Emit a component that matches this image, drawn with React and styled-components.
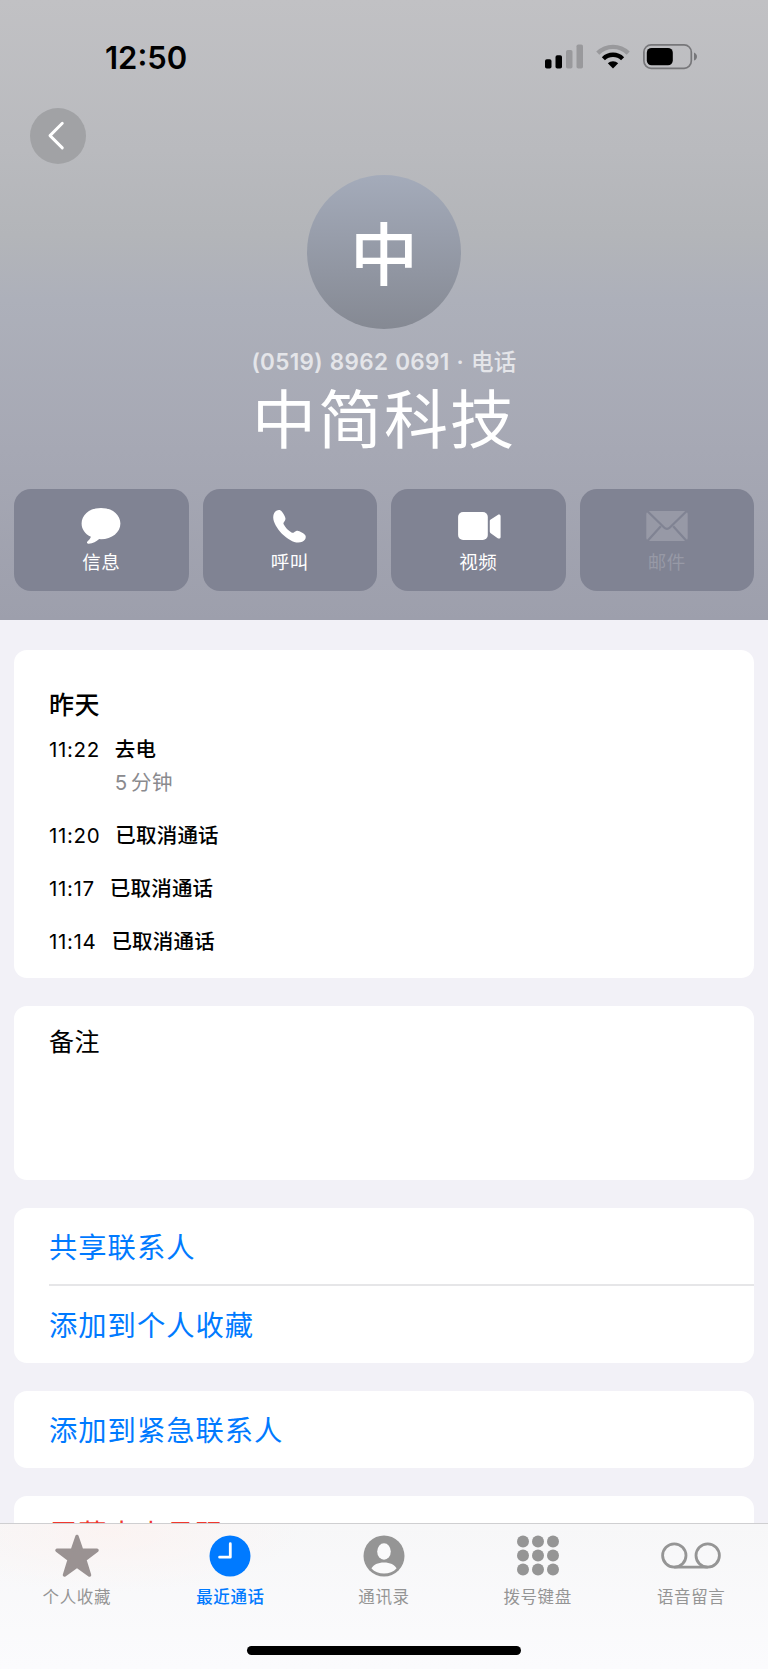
import React from 'react';
import styled, { createGlobalStyle } from 'styled-components';

const GlobalStyle = createGlobalStyle`
  * {
    box-sizing: border-box;
  }

  body {
    margin: 0;
    background: #f2f1f7;
    font-family: Inter, 'Noto Sans CJK SC', sans-serif;
    color: #000;
  }

  svg {
    display: block;
    overflow: visible;
  }
`;

const Page = styled.div`
  display: flex;
  flex-direction: column;
  width: 768px;
  height: 1669px;
  overflow: hidden;
`;

const Content = styled.main`
  flex: 1;
  min-height: 0;
  overflow: hidden;
`;

const Header = styled.header`
  display: flex;
  flex-direction: column;
  height: 620px;
  background: linear-gradient(
    180deg,
    #c1c1c4 0,
    #b9babe 150px,
    #b3b5b9 235px,
    #adb0ba 300px,
    #a6a8b4 450px,
    #9d9fac 620px
  );
`;

const StatusBar = styled.div`
  display: flex;
  align-items: center;
  justify-content: space-between;
  height: 108px;
  padding: 5px 71px 0 105px;
`;

const Time = styled.span`
  padding-top: 2px;
  font-size: 31px;
  font-weight: 600;
  line-height: 36px;
`;

const StatusIcons = styled.div`
  display: flex;
  align-items: center;
  gap: 13px;
`;

const BackButton = styled.button`
  display: flex;
  align-items: center;
  justify-content: center;
  width: 56px;
  height: 56px;
  margin-left: 30px;
  padding: 0;
  border: 0;
  border-radius: 50%;
  background: #a1a2a5;
`;

const Avatar = styled.div`
  align-self: center;
  width: 154px;
  height: 154px;
  margin-top: 11px;
  border-radius: 50%;
  background: linear-gradient(180deg, #a4abba, #858993);
  color: #fff;
  font-size: 68px;
  font-weight: 500;
  line-height: 160px;
  text-align: center;
`;

const PhoneLine = styled.p`
  margin: 19px 0 0;
  color: #e4e5e9;
  font-size: 22.5px;
  font-weight: 600;
  line-height: 28px;
  letter-spacing: 0.3px;
  word-spacing: 1px;
  text-align: center;
`;

const PhoneKind = styled.span`
  font-weight: 500;
`;

const ContactName = styled.h1`
  margin: 7px 0 0;
  color: #fff;
  font-size: 64px;
  font-weight: 400;
  line-height: 74px;
  letter-spacing: 2px;
  text-align: center;
`;

const Actions = styled.div`
  display: grid;
  grid-template-columns: repeat(4, 1fr);
  gap: 14px;
  margin-top: 32px;
  padding: 0 14px;
`;

const ActionTile = styled.button`
  display: flex;
  flex-direction: column;
  align-items: center;
  height: 102px;
  padding: 17px 0 0;
  border: 0;
  border-radius: 17px;
  background: #808393;
  color: ${({ $disabled }) => ($disabled ? '#9799a6' : '#fff')};
  font-family: inherit;
`;

const ActionLabel = styled.span`
  margin-top: 4px;
  font-size: 18.5px;
  line-height: 24px;
  letter-spacing: 0.6px;
`;

const Sections = styled.div`
  display: flex;
  flex-direction: column;
  gap: 28px;
  padding: 30px 14px 0;
`;

const Card = styled.section`
  flex-shrink: 0;
  height: ${({ $height }) => $height}px;
  padding-left: 35px;
  border-radius: 13px;
  background: #fff;
`;

const DayTitle = styled.h2`
  margin: 0;
  padding-top: 39px;
  font-size: 25px;
  font-weight: 500;
  line-height: 32px;
  letter-spacing: 0.6px;
`;

const CallList = styled.div`
  padding-top: 14px;
`;

const CallRow = styled.div`
  display: flex;
  gap: 15px;
  padding-bottom: 23px;
  font-size: 20.5px;
  line-height: 30px;
`;

const CallTime = styled.span`
  font-kerning: none;
  letter-spacing: 0.65px;
`;

const CallInfo = styled.div`
  display: flex;
  flex-direction: column;
  gap: 3px;
`;

const CallKind = styled.span`
  font-weight: 500;
  letter-spacing: 0.2px;
`;

const CallLength = styled.span`
  color: #8a8a8e;
  letter-spacing: 0.5px;
  word-spacing: -3px;
`;

const NoteTitle = styled.h2`
  margin: 0;
  padding-top: 20px;
  font-size: 25px;
  font-weight: 400;
  line-height: 32px;
  letter-spacing: 0.6px;
`;

const LinkRow = styled.div`
  height: 77px;
  border-top: ${({ $divided }) => ($divided ? '2px solid #e6e6e8' : '0')};
  color: ${({ $danger }) => ($danger ? '#f0382e' : '#007aff')};
  font-size: 28.3px;
  line-height: ${({ $danger }) => ($danger ? 79 : 81)}px;
  letter-spacing: 1px;

  & + & {
    height: 79px;
    margin-top: -1px;
    line-height: 80px;
  }
`;

const TabBar = styled.nav`
  flex-shrink: 0;
  height: 146px;
  border-top: 1px solid #cfcfd1;
  background:
    radial-gradient(ellipse 190px 60px at 110px 8px, rgba(255, 240, 236, 0.5), rgba(255, 243, 240, 0)),
    linear-gradient(180deg, #f7f7f8, #fbfbfd);
`;

const Tabs = styled.div`
  display: grid;
  grid-template-columns: repeat(5, 1fr);
  height: 122px;
`;

const Tab = styled.div`
  display: flex;
  flex-direction: column;
  align-items: center;
  padding-top: 8px;
  color: ${({ $active }) => ($active ? '#007aff' : '#959595')};
  font-size: 16.5px;
  font-weight: ${({ $active }) => ($active ? 500 : 400)};
  line-height: 24px;
  letter-spacing: 0.6px;
`;

const TabIcon = styled.div`
  display: flex;
  align-items: center;
  height: 48px;
  margin-bottom: 5px;
`;

const HomeIndicator = styled.div`
  width: 274px;
  height: 9px;
  margin: 0 auto;
  border-radius: 5px;
  background: #000;
`;

const SignalIcon = () => (
  <svg width="38" height="25" viewBox="0 0 38 25">
    <rect x="0" y="15.2" width="6.5" height="9.3" rx="1.8" />
    <rect x="10.5" y="11.2" width="6.5" height="13.3" rx="1.8" />
    <rect x="21" y="6" width="6.5" height="18.5" rx="1.8" fill="#99999c" />
    <rect x="31.5" y="0.5" width="6.5" height="24" rx="1.8" fill="#99999c" />
  </svg>
);

const WifiIcon = () => (
  <svg width="34" height="25" viewBox="0 0 34 25" fill="none" strokeWidth="4.4">
    <path d="M1.8 9.1a21.6 21.6 0 0 1 30.4 0" stroke="#99999c" />
    <path d="M7.4 14.7a13.6 13.6 0 0 1 19.2 0" stroke="#000" />
    <path d="M11.8 19.3a7.4 7.4 0 0 1 10.4 0L17 24.6z" fill="#000" />
  </svg>
);

const BatteryIcon = () => (
  <svg width="54" height="25" viewBox="0 0 54 25">
    <rect x="0.9" y="0.9" width="47.4" height="23.4" rx="7.2" fill="none" stroke="#77777a" strokeWidth="1.7" />
    <rect x="3.8" y="3.9" width="26" height="17.4" rx="4.8" />
    <path d="M51 8.4c1.8.8 3 2.3 3 4.1s-1.2 3.4-3 4.1z" fill="#77777a" />
  </svg>
);

const BackIcon = () => (
  <svg width="56" height="56" viewBox="0 0 56 56" fill="none">
    <path d="M32.3 15.3 20 27.6l12.3 12.3" stroke="#fff" strokeWidth="2.9" strokeLinecap="round" strokeLinejoin="round" />
  </svg>
);

const MessageIcon = () => (
  <svg width="44" height="40" viewBox="0 0 44 40" fill="currentColor">
    <path d="M22 1.9C11 1.9 2.6 8.6 2.6 17.4c0 5.8 3.6 10.6 9.3 13.4-.6 1.7-1.8 3.2-3.3 4.5-1.3 1.2-.6 2.7 1.1 2.5 4.3-.4 7.6-2.2 10.500-4.700l1.800.1c11 0 19.400-7 19.400-15.800S33 1.900 22 1.900z" />
  </svg>
);

const PhoneIcon = () => (
  <svg width="44" height="40" viewBox="1.3 0 44 40" fill="currentColor">
    <path d="M10.1 4.6c2.1-1.1 3.9-.6 5.2 1.2 1.5 2 2.7 4.1 3.3 5.9.5 1.5-.1 2.7-1.1 4-.8 1-1 1.7-.4 2.9 1.7 3.3 4.3 6 7.7 7.9 1 .6 1.800.4 2.700-.3 1.900-1.400 3.300-1.900 5.200-.9 1.900.9 4 2.100 5.200 3.200 1.500 1.400 1.500 3.200.4 5-1.300 2-3.800 3-6.800 3-4.900 0-11-3.600-16.300-8.800C10.400 22.600 6.500 16.300 6.500 11.300c0-3.100 1.500-5.600 3.600-6.700z" />
  </svg>
);

const VideoIcon = () => (
  <svg width="44" height="40" viewBox="-1.5 0 44 40" fill="currentColor">
    <rect x="0.6" y="6" width="29.7" height="28" rx="5" />
    <path d="M32.3 14.7v10.8c0 .8.3 1.3.9 1.8l7 4.9c1.3.9 2.9.3 2.9-1.3V10.2c0-1.6-1.6-2.2-2.9-1.3l-7 4.5c-.6.4-.9.7-.9 1.3z" />
  </svg>
);

const MailIcon = () => (
  <svg width="44" height="40" viewBox="0 0 44 40">
    <rect x="1.3" y="5" width="41.4" height="30" rx="3.5" fill="currentColor" />
    <path
      d="M2 4.7 19.4 21.8c1.5 1.5 3.7 1.5 5.2 0L42 4.7M2 35.5l13.8-15.3M42 35.5 28.2 20.2"
      fill="none"
      stroke="#808393"
      strokeWidth="2.2"
    />
  </svg>
);

const StarIcon = () => (
  <svg width="46" height="46" viewBox="0 0 46 46">
    <path
      d="M23 3.5 27.7 17.3H43L30.8 26.7 35.5 42 23 33 10.5 42 15.2 26.7 3 17.3H18.3z"
      fill="#9a9292"
      stroke="#9a9292"
      strokeWidth="3.5"
      strokeLinejoin="round"
    />
  </svg>
);

const ClockIcon = () => (
  <svg width="42" height="42" viewBox="0 0 42 42">
    <circle cx="21" cy="21" r="20.5" fill="#007aff" />
    <path d="M21.3 8.7v13.5H10.6" fill="none" stroke="#fff" strokeWidth="2.8" strokeLinecap="round" strokeLinejoin="round" />
  </svg>
);

const PersonIcon = () => (
  <svg width="42" height="42" viewBox="0 0 42 42">
    <circle cx="21" cy="21" r="20.5" fill="#959595" />
    <ellipse cx="21" cy="16.5" rx="6.8" ry="8.2" fill="#fafafb" />
    <path d="M8.5 33.4c1.6-3.7 6.5-6 12.5-6s10.9 2.3 12.5 6c-3 3.2-7.5 5.2-12.5 5.2s-9.5-2-12.5-5.2z" fill="#fafafb" />
  </svg>
);

const KeypadIcon = () => (
  <svg width="42" height="42" viewBox="0 0 42 42" fill="#959595">
    {[6.5, 20.5, 34.5].map((y) =>
      [6, 21, 36].map((x) => <circle key={`${x}-${y}`} cx={x} cy={y} r="6" />)
    )}
  </svg>
);

const VoicemailIcon = () => (
  <svg width="60" height="42" viewBox="0 0 60 42" fill="none" stroke="#959595" strokeWidth="2.8">
    <circle cx="13.3" cy="20.5" r="11.7" />
    <circle cx="46.7" cy="20.5" r="11.7" />
    <path d="M13.3 32.2h33.4" />
  </svg>
);

const actions = [
  { label: '信息', Icon: MessageIcon },
  { label: '呼叫', Icon: PhoneIcon },
  { label: '视频', Icon: VideoIcon },
  { label: '邮件', Icon: MailIcon, disabled: true },
];

const calls = [
  { time: '11:22', kind: '去电', length: '5 分钟' },
  { time: '11:20', kind: '已取消通话' },
  { time: '11:17', kind: '已取消通话' },
  { time: '11:14', kind: '已取消通话' },
];

const tabs = [
  { label: '个人收藏', Icon: StarIcon },
  { label: '最近通话', Icon: ClockIcon, active: true },
  { label: '通讯录', Icon: PersonIcon },
  { label: '拨号键盘', Icon: KeypadIcon },
  { label: '语音留言', Icon: VoicemailIcon },
];

const App = () => (
  <>
    <GlobalStyle />
    <Page>
      <Content>
        <Header>
          <StatusBar>
            <Time>12:50</Time>
            <StatusIcons>
              <SignalIcon />
              <WifiIcon />
              <BatteryIcon />
            </StatusIcons>
          </StatusBar>
          <BackButton aria-label="返回">
            <BackIcon />
          </BackButton>
          <Avatar>中</Avatar>
          <PhoneLine>
            (0519) 8962 0691 · <PhoneKind>电话</PhoneKind>
          </PhoneLine>
          <ContactName>中简科技</ContactName>
          <Actions>
            {actions.map(({ label, Icon, disabled }) => (
              <ActionTile key={label} $disabled={disabled}>
                <Icon />
                <ActionLabel>{label}</ActionLabel>
              </ActionTile>
            ))}
          </Actions>
        </Header>

        <Sections>
          <Card $height={328}>
            <DayTitle>昨天</DayTitle>
            <CallList>
              {calls.map(({ time, kind, length }) => (
                <CallRow key={time}>
                  <CallTime>{time}</CallTime>
                  <CallInfo>
                    <CallKind>{kind}</CallKind>
                    {length && <CallLength>{length}</CallLength>}
                  </CallInfo>
                </CallRow>
              ))}
            </CallList>
          </Card>
          <Card $height={174}>
            <NoteTitle>备注</NoteTitle>
          </Card>
          <Card $height={155}>
            <LinkRow>共享联系人</LinkRow>
            <LinkRow $divided>添加到个人收藏</LinkRow>
          </Card>
          <Card $height={77}>
            <LinkRow>添加到紧急联系人</LinkRow>
          </Card>
          <Card $height={77}>
            <LinkRow $danger>屏蔽来电号码</LinkRow>
          </Card>
        </Sections>
      </Content>

      <TabBar>
        <Tabs>
          {tabs.map(({ label, Icon, active }) => (
            <Tab key={label} $active={active}>
              <TabIcon>
                <Icon />
              </TabIcon>
              {label}
            </Tab>
          ))}
        </Tabs>
        <HomeIndicator />
      </TabBar>
    </Page>
  </>
);

export default App;
